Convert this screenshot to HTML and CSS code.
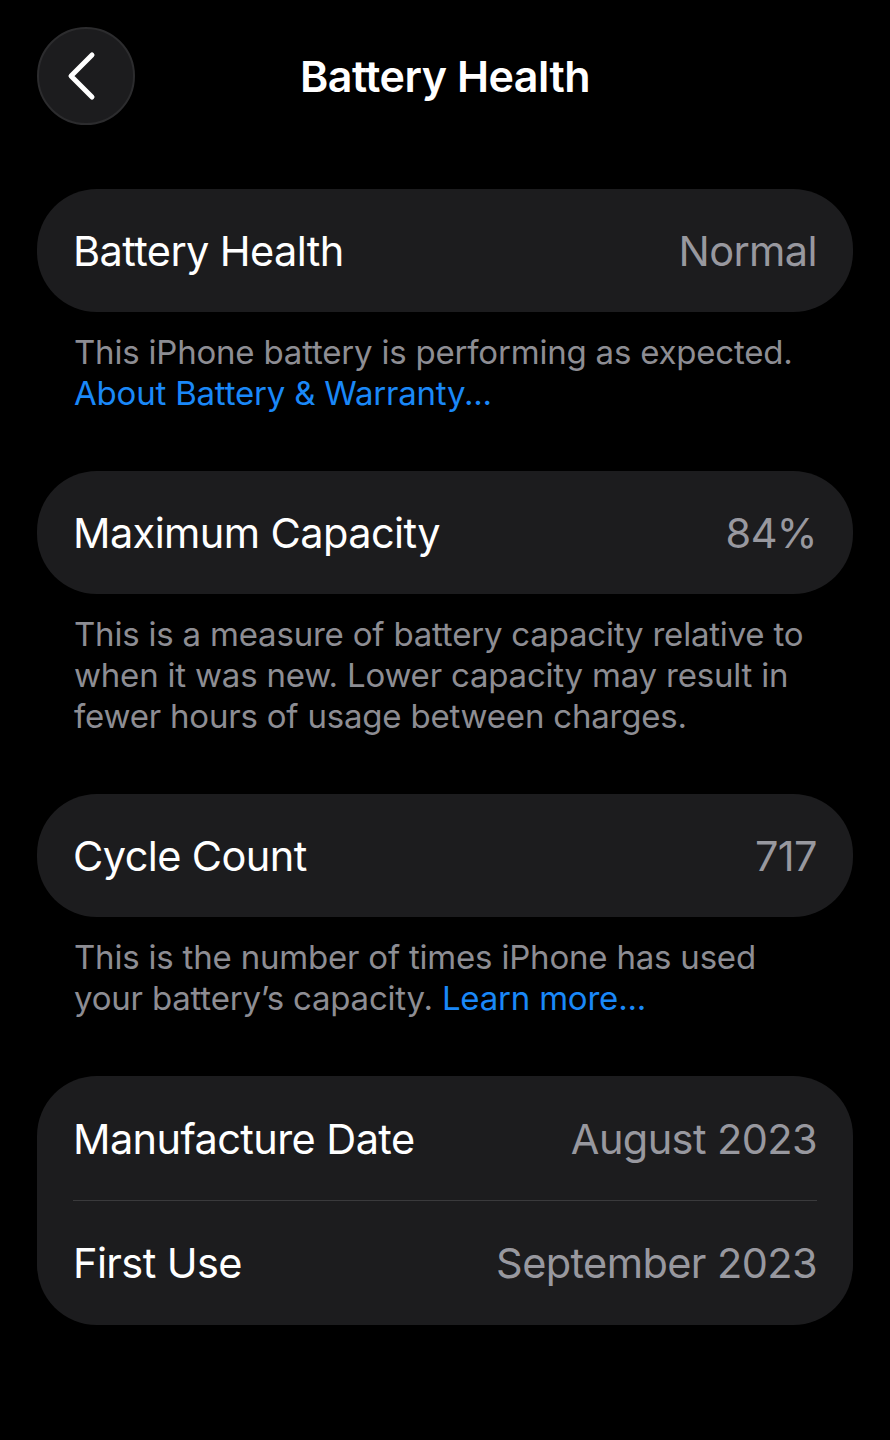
FILE: index.html
```html
<!DOCTYPE html>
<html lang="en">
<head>
  <meta charset="UTF-8" />
  <meta name="viewport" content="width=device-width, initial-scale=1.0" />
  <title>Battery Health</title>
  <link rel="stylesheet" href="styles.css">
</head>
<body>

  <div class="screen">
    <!-- Header -->
    <div class="header">
      <button class="back" aria-label="Back">
        <svg width="30" height="50" viewBox="0 0 30 50">
          <path d="M26 4 L5 25 L26 46" fill="none" stroke="#fff" stroke-width="5" stroke-linecap="round" stroke-linejoin="round" />
        </svg>
      </button>
      <h1 class="title">Battery Health</h1>
    </div>

    <!-- Battery health -->
    <div class="card">
      <div class="row">
        <span class="label">Battery Health</span>
        <span class="value">Normal</span>
      </div>
    </div>
    <p class="note">This iPhone battery is performing as expected.<br><a href="#">About Battery &amp; Warranty...</a></p>

    <!-- Maximum capacity -->
    <div class="card">
      <div class="row">
        <span class="label">Maximum Capacity</span>
        <span class="value">84%</span>
      </div>
    </div>
    <p class="note">This is a measure of battery capacity relative to when it was new. Lower capacity may result in fewer hours of usage between charges.</p>

    <!-- Cycle count -->
    <div class="card">
      <div class="row">
        <span class="label">Cycle Count</span>
        <span class="value">717</span>
      </div>
    </div>
    <p class="note">This is the number of times iPhone has used your battery’s capacity. <a href="#">Learn more...</a></p>

    <!-- Dates -->
    <div class="card">
      <div class="row">
        <span class="label">Manufacture Date</span>
        <span class="value">August 2023</span>
      </div>
      <div class="row">
        <span class="label">First Use</span>
        <span class="value">September 2023</span>
      </div>
    </div>
  </div>

</body>
</html>
```

FILE: styles.css
```css
body {
  margin: 0;
  padding: 0;
  background-color: #000;
  color: #fff;
  font-family: Inter, 'Noto Sans', sans-serif;
}

.screen {
  padding: 27px 37px 0;
}

.header {
  display: flex;
  align-items: center;
  height: 98px;
  position: relative;
  margin-bottom: 64px;
}

.back {
  width: 98px;
  height: 98px;
  border-radius: 50%;
  background-color: #1c1c1e;
  border: 2px solid #2c2c2e;
  display: flex;
  align-items: center;
  justify-content: center;
  padding: 0 10px 0 0;
  cursor: pointer;
}

.title {
  position: absolute;
  left: 0;
  right: 0;
  margin: 0;
  text-align: center;
  font-size: 43px;
  font-weight: 600;
  letter-spacing: -0.5px;
  pointer-events: none;
}

.card {
  background-color: #1c1c1e;
  border-radius: 60px;
  padding: 0 36px;
}

.row {
  display: flex;
  justify-content: space-between;
  align-items: center;
  height: 123px;
  font-size: 41.5px;
  letter-spacing: -0.6px;
}

.row + .row {
  border-top: 1px solid #3a3a3c;
  height: 124px;
}

.card:last-child {
  padding-top: 1px;
}

.value {
  color: #98989f;
}

.note {
  margin: 0;
  padding: 20px 37px 57px;
  font-size: 33px;
  line-height: 41px;
  color: #8d8d93;
  letter-spacing: -0.2px;
}

.note a {
  color: #1a88f8;
  text-decoration: none;
}
```
